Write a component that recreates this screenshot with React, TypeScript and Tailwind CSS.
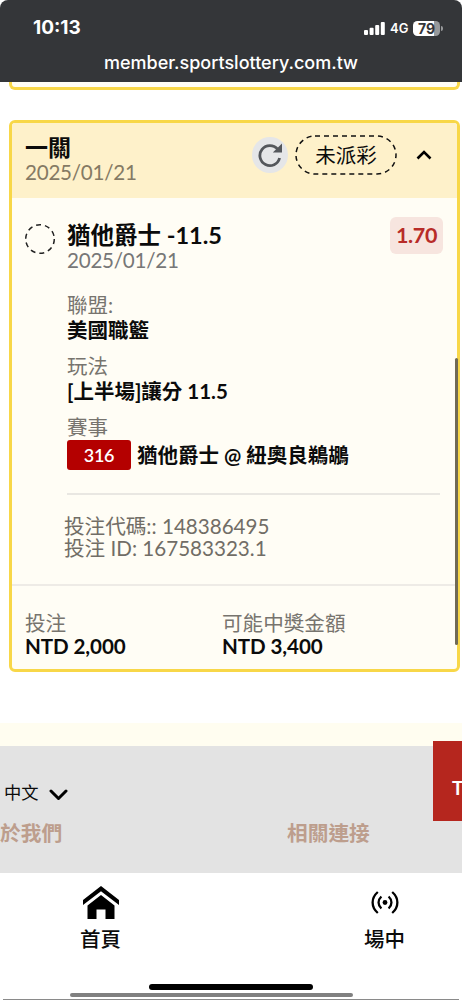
import React from 'react';

interface Detail {
    label: string;
    value: string;
}

const details: Detail[] = [
    { label: '聯盟:', value: '美國職籃' },
    { label: '玩法', value: '[上半場]讓分 11.5' },
];

function StatusBar() {
    return (
        <header className="relative h-[82px] shrink-0 bg-white">
            <div className="h-full rounded-t-[8px] bg-[#343639] pt-[17px] text-white font-['Inter','Liberation_Sans',sans-serif]">
                <div className="flex h-[22px] items-center justify-between pl-[33px] pr-[19px]">
                    <span className="text-[19px] font-bold leading-[22px]">10:13</span>
                    <div className="flex items-center">
                        <svg width="21" height="13" viewBox="0 0 21 13" fill="#fff">
                            <rect x="0" y="8" width="4" height="5" rx="1" />
                            <rect x="5.6" y="5.8" width="4" height="7.2" rx="1" />
                            <rect x="11.2" y="3" width="4" height="10" rx="1" />
                            <rect x="16.8" y="0" width="4" height="13" rx="1" />
                        </svg>
                        <span className="ml-[5px] w-[18px] text-[13px] font-semibold leading-[22px]">4G</span>
                        <div className="ml-[5px] flex h-[15px] w-[27px] items-center justify-center overflow-hidden rounded-[4.5px] bg-[linear-gradient(90deg,#fff_79%,#97999b_79%)] text-[14px] font-bold leading-[15px] text-[#343639]">
                            79
                        </div>
                        <div className="ml-px h-[5px] w-[2px] rounded-r-full bg-[#97999b]" />
                    </div>
                </div>
                <div className="mt-[13px] text-center text-[18px] font-medium leading-[22px]">
                    member.sportslottery.com.tw
                </div>
            </div>
        </header>
    );
}

function BetCard() {
    return (
        <section className="ml-[9px] mt-[30px] flex h-[552px] w-[451px] shrink-0 flex-col overflow-hidden rounded-[6px] border-3 border-[#f8d748] bg-[#fffdf5]">
            <div className="flex h-[75px] shrink-0 bg-[#fef1ca] pl-[13px] pr-[25px]">
                <div className="pt-3">
                    <h2 className="text-[23px] font-bold leading-[25px]">一關</h2>
                    <p className="text-[20.6px] leading-[25px] tracking-[-0.25px] text-[#857a64]">2025/01/21</p>
                </div>
                <div className="ml-auto flex h-[40px] items-center pt-[24px]">
                    <div className="flex size-[36px] items-center justify-center rounded-full bg-[#e5e6e8]">
                        <svg width="26" height="26" viewBox="0 0 26 26">
                            <path d="M20.6 7.2A10 10 0 1 0 22.6 16" fill="none" stroke="#54575c" strokeWidth="2.8" />
                            <path d="M25 1.5V10.5H15.8Z" fill="#54575c" />
                        </svg>
                    </div>
                    <div className="relative ml-[7px] flex h-[40px] w-[102px] items-center justify-center pt-px text-[20.5px]">
                        <svg className="absolute inset-0" width="102" height="40" viewBox="0 0 102 40">
                            <rect x="1" y="1" width="100" height="38" rx="19" fill="none" stroke="#111" strokeWidth="1.5" strokeDasharray="5 4" />
                        </svg>
                        未派彩
                    </div>
                    <svg className="ml-[19px]" width="16" height="10" viewBox="0 0 16 10" fill="none" stroke="#000" strokeWidth="2.6">
                        <path d="M1.5 8.5L8 2L14.5 8.5" />
                    </svg>
                </div>
            </div>

            <div className="flex pl-[12px] pr-[14px] pt-[19px]">
                <svg className="mt-[6px] shrink-0" width="32" height="32" viewBox="0 0 32 32">
                    <circle cx="16" cy="16" r="14.3" fill="none" stroke="#222" strokeWidth="1.5" strokeDasharray="5 4" />
                </svg>
                <div className="ml-[11px]">
                    <h3 className="whitespace-nowrap text-[23.5px] font-bold leading-[37px]">猶他爵士 -11.5</h3>
                    <p className="-mt-[6px] text-[20.6px] leading-[25px] tracking-[-0.25px] text-[#777]">2025/01/21</p>
                </div>
                <div className="ml-auto flex h-[37px] w-[53px] items-center justify-center rounded-[6px] bg-[#f7e5df] text-[21.5px] font-bold tracking-[-0.4px] text-[#b82c28]">
                    1.70
                </div>
            </div>

            <div className="ml-[55px] mr-[17px] mt-5 border-b-2 border-[#e9e7e2] pb-[23px] text-[20.5px]">
                {details.map(d => (
                    <div key={d.label} className="mb-[11px] leading-[25px]">
                        <div className="text-[#77746e]">{d.label}</div>
                        <div className="font-bold">{d.value}</div>
                    </div>
                ))}
                <div className="leading-[25px] text-[#77746e]">賽事</div>
                <div className="flex items-center whitespace-nowrap">
                    <span className="flex h-[30px] w-[64px] items-center justify-center rounded-[3px] bg-[#b40000] text-[18px] font-semibold tracking-[-0.3px] text-white">
                        316
                    </span>
                    <span className="ml-[6px] font-bold leading-[30px]">猶他爵士 @ 紐奧良鵜鶘</span>
                </div>
            </div>

            <div className="ml-[52px] mt-5 text-[20.6px] leading-[22px] text-[#716d66]">
                <p>投注代碼:: 148386495</p>
                <p>投注 ID: 167583323.1</p>
            </div>

            <div className="mt-[25px] grid grid-cols-[197px_1fr] border-t-2 border-[#eeebe6] pl-[13px] pt-[26px] text-[20.6px] leading-[22.5px]">
                <div>
                    <div className="text-[#77746e]">投注</div>
                    <div className="font-bold tracking-[-0.1px]">NTD 2,000</div>
                </div>
                <div>
                    <div className="text-[#77746e]">可能中獎金額</div>
                    <div className="font-bold tracking-[-0.1px]">NTD 3,400</div>
                </div>
            </div>
        </section>
    );
}

function Footer() {
    return (
        <footer className="relative mt-[51px] h-[150px] shrink-0 border-t-[23px] border-[#fffdf0] bg-[#e3e3e3] pt-[34px]">
            <div className="flex items-center pl-[4px]">
                <span className="text-[17.3px] leading-[26px]">中文</span>
                <svg className="ml-[10px] mt-[3px]" width="19" height="12" viewBox="0 0 19 12" fill="none" stroke="#000" strokeWidth="3" strokeLinecap="round" strokeLinejoin="round">
                    <path d="M2 2L9.5 9.5L17 2" />
                </svg>
            </div>
            <div className="mt-[14px] grid grid-cols-[287px_1fr] text-[20.7px] font-bold leading-[26px] text-[#bd9e8d]">
                <span>於我們</span>
                <span>相關連接</span>
            </div>
            <div className="absolute -top-[5px] right-0 flex h-[80px] w-[29px] items-center overflow-hidden bg-[#b5261e] pl-[19px] pt-[14px] text-[19px] font-bold text-white">
                T
            </div>
        </footer>
    );
}

function BottomNav() {
    return (
        <nav className="relative h-[127px] shrink-0 bg-white text-[20.5px] font-medium leading-[26px]">
            <div className="flex justify-between pl-[70px] pr-[47px] pt-[13px]">
                <div className="flex w-[61px] flex-col items-center">
                    <svg width="36" height="33" viewBox="0 0 36 33" fill="#000">
                        <path d="M18 0L36 14V19L18 5.2L0 19V14Z" />
                        <path d="M18 9L31.5 19.5V33H22.5V23.5H13.5V33H4.5V19.5Z" />
                    </svg>
                    <span className="mt-[7px]">首頁</span>
                </div>
                <div className="flex w-[61px] flex-col items-center">
                    <svg className="my-[5px]" width="28" height="23" viewBox="0 0 28 23" fill="none" stroke="#000" strokeWidth="2.3">
                        <circle cx="14" cy="11.5" r="2.4" fill="#000" stroke="none" />
                        <path d="M6.8 1C-.1 7 -.1 16 6.8 22M21.2 1C28.1 7 28.1 16 21.2 22M10.4 5.5C6.6 9 6.6 14 10.4 17.5M17.6 5.5C21.4 9 21.4 14 17.6 17.5" />
                    </svg>
                    <span className="mt-[7px]">場中</span>
                </div>
            </div>
            <div className="absolute left-[149px] top-[111px] h-[6px] w-[164px] rounded-full bg-black" />
            <div className="absolute left-[70px] top-[120px] h-[3.5px] w-[283px] rounded-full bg-[#808080]" />
            <div className="absolute left-[3px] top-[126px] h-px w-[456px] bg-[#8a8a8a]" />
        </nav>
    );
}

export default function App() {
    return (
        <div className="relative flex h-[1000px] w-[462px] flex-col overflow-hidden bg-white text-[#0b0b0b] font-['Lato','Noto_Sans_CJK_TC',sans-serif]">
            <StatusBar />
            <div className="ml-[9px] h-[8px] w-[451px] shrink-0 rounded-b-[6px] border-3 border-t-0 border-[#f8d748] bg-[#fffdf5]" />
            <BetCard />
            <Footer />
            <BottomNav />
            <div className="absolute left-[455px] top-[358px] h-[287px] w-[3px] rounded-full bg-[#716a55]" />
        </div>
    );
}
